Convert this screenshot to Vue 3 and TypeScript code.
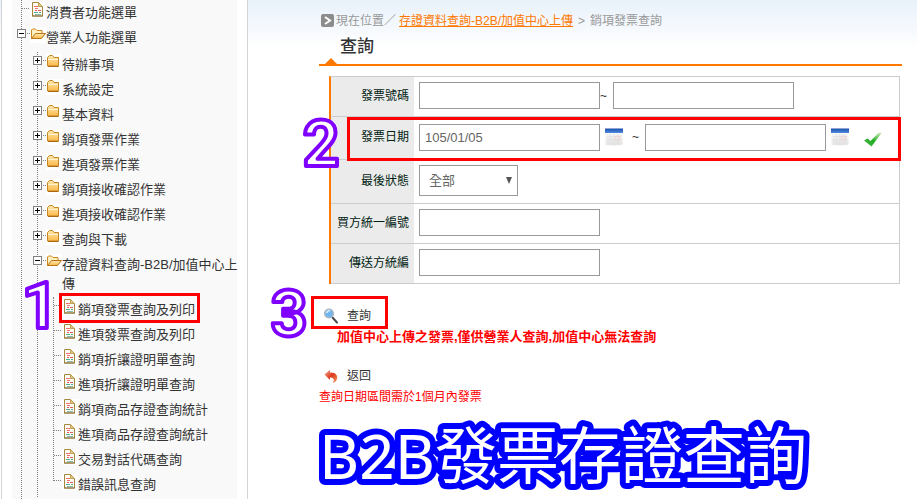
<script setup lang="ts">
import { reactive } from 'vue'

interface TreeNode {
  label: string
  kind: 'folder' | 'page'
  open?: boolean
  marked?: boolean
  children?: TreeNode[]
}

const folder = (label: string): TreeNode => ({ label, kind: 'folder' })
const page = (label: string, marked = false): TreeNode => ({ label, kind: 'page', marked })

const tree = reactive<TreeNode[]>([
  page('消費者功能選單'),
  {
    label: '營業人功能選單',
    kind: 'folder',
    open: true,
    children: [
      folder('待辦事項'),
      folder('系統設定'),
      folder('基本資料'),
      folder('銷項發票作業'),
      folder('進項發票作業'),
      folder('銷項接收確認作業'),
      folder('進項接收確認作業'),
      folder('查詢與下載'),
      {
        label: '存證資料查詢-B2B/加值中心上傳',
        kind: 'folder',
        open: true,
        children: [
          page('銷項發票查詢及列印', true),
          page('進項發票查詢及列印'),
          page('銷項折讓證明單查詢'),
          page('進項折讓證明單查詢'),
          page('銷項商品存證查詢統計'),
          page('進項商品存證查詢統計'),
          page('交易對話代碼查詢'),
          page('錯誤訊息查詢'),
        ],
      },
    ],
  },
])

const form = reactive({
  invoiceFrom: '',
  invoiceTo: '',
  dateFrom: '105/01/05',
  dateTo: '',
  status: 'all',
  buyerId: '',
  senderId: '',
})

function toggle(node: TreeNode) {
  node.open = !node.open
}
</script>

<template>
  <svg class="defs" aria-hidden="true">
    <defs>
      <linearGradient id="g-folder" x1="0" y1="0" x2="0" y2="1">
        <stop offset="0" stop-color="#ffe9b0" />
        <stop offset="1" stop-color="#fbb94a" />
      </linearGradient>
      <linearGradient id="g-cal" x1="0" y1="0" x2="0" y2="1">
        <stop offset="0" stop-color="#1a4dab" />
        <stop offset="1" stop-color="#4f8be0" />
      </linearGradient>
      <linearGradient id="g-sheet" x1="0" y1="0" x2="0" y2="1">
        <stop offset="0" stop-color="#fafafa" />
        <stop offset="1" stop-color="#e2e2e2" />
      </linearGradient>
      <linearGradient id="g-check" x1="1" y1="0" x2="0" y2="1">
        <stop offset="0" stop-color="#e0efc8" />
        <stop offset="0.55" stop-color="#1fae1f" />
        <stop offset="1" stop-color="#5cb05c" />
      </linearGradient>
      <linearGradient id="g-back" x1="0" y1="0" x2="1" y2="1">
        <stop offset="0" stop-color="#f7b09a" />
        <stop offset="0.5" stop-color="#dd3a1c" />
        <stop offset="1" stop-color="#f0a060" />
      </linearGradient>
      <symbol id="i-page" viewBox="0 0 16 16">
        <path d="M0 0h16v16H0z" fill="#fff" />
        <path d="M2.500 0.500h6l4 4v9.500h-10z" fill="#fffdf6" stroke="#a8873c" />
        <path d="M8.500 0.500v4h4z" fill="#dcc88c" stroke="#c0a050" />
        <path d="M2 14h11" stroke="#857238" />
        <path d="M4 4.500h4M5 6.500h3" stroke="#f07070" />
        <path d="M5 8.500h2M8 8.500h3" stroke="#e05858" />
        <path d="M4 10.500h4M9 10.500h2" stroke="#4fae8c" />
        <path d="M5 12.500h6" stroke="#8ab8b4" />
      </symbol>
      <symbol id="i-folder" viewBox="0 0 16 16">
        <path d="M0 0h16v16H0z" fill="#fff" />
        <path d="M1.500 3.500l2-2h3l1.500 2h4.500v8.500h-11z" fill="url(#g-folder)" stroke="#c58520" stroke-linejoin="round" />
        <path d="M2 5.500h10" stroke="#fff2cc" />
        <path d="M2 12.500h10.500" stroke="#a86a14" />
      </symbol>
      <symbol id="i-open" viewBox="0 0 16 16">
        <path d="M0 0h16v16H0z" fill="#fff" />
        <path d="M1.500 11.500V3l1-1h3l1.500 1.500h5v3" fill="#fff0c4" stroke="#d0861c" />
        <path d="M1.500 11.500l4-5h10l-4 5z" fill="url(#g-folder)" stroke="#b87418" stroke-linejoin="round" />
      </symbol>
      <symbol id="i-calendar" viewBox="0 0 20 18">
        <ellipse cx="10" cy="16" rx="9" ry="1.500" fill="#e4e4e4" />
        <path d="M1.500 4h17v11.500q-8 1.500-17-1z" fill="url(#g-sheet)" />
        <path d="M3 8.500h14M3 11.500h14M6.500 6v9M10 6v9M14 6v9" stroke="#dedee2" stroke-width="0.600" />
        <path d="M11.500 8h4v4h-4z" fill="none" stroke="#f4c8c4" stroke-width="0.600" />
        <path d="M1 0.500h18v4.500h-18z" fill="url(#g-cal)" />
      </symbol>
    </defs>
  </svg>

  <div class="page">
    <nav class="sidebar" aria-label="功能選單">
      <ul class="tree root">
        <li v-for="top in tree" :key="top.label">
          <div class="row">
            <span v-if="top.kind === 'page'" class="joint leaf"></span>
            <span v-else class="joint">
              <button type="button" class="toggle" :class="{ closed: !top.open }" :aria-label="top.label" @click="toggle(top)"></button>
            </span>
            <svg class="icon"><use :href="top.kind === 'page' ? '#i-page' : top.open ? '#i-open' : '#i-folder'" /></svg>
            <a href="#">{{ top.label }}</a>
          </div>
          <ul v-if="top.children && top.open" class="tree">
            <li v-for="mid in top.children" :key="mid.label">
              <div class="row">
                <span class="joint">
                  <button type="button" class="toggle" :class="{ closed: !mid.open }" :aria-label="mid.label" @click="toggle(mid)"></button>
                </span>
                <svg class="icon"><use :href="mid.open ? '#i-open' : '#i-folder'" /></svg>
                <a href="#">{{ mid.label }}</a>
              </div>
              <ul v-if="mid.children && mid.open" class="tree last">
                <li v-for="item in mid.children" :key="item.label">
                  <div class="row">
                    <span class="joint leaf"></span>
                    <svg class="icon"><use href="#i-page" /></svg>
                    <a href="#">{{ item.label }}</a>
                    <span v-if="item.marked" class="mark mark-menu">
                      <svg class="step"><text x="20" y="50">1</text></svg>
                    </span>
                  </div>
                </li>
              </ul>
            </li>
          </ul>
        </li>
      </ul>
    </nav>

    <main class="main">
      <div class="crumbs">
        <svg class="crumb-icon" viewBox="0 0 14 14" aria-hidden="true">
          <rect x="0" y="0" width="13" height="13" rx="2" fill="#8c8c8c" />
          <path d="M4 3l5 3.500-5 3.500" fill="none" stroke="#fff" stroke-width="2" />
        </svg>
        <span>現在位置／</span>
        <a href="#">存證資料查詢-B2B/加值中心上傳</a>
        <span class="sep">&gt;</span>
        <span>銷項發票查詢</span>
      </div>
      <h1 class="title">查詢</h1>

      <form @submit.prevent>
        <table class="fields">
          <tbody>
            <tr>
              <th scope="row"><label for="invoice-from">發票號碼</label></th>
              <td>
                <div class="line">
                  <input id="invoice-from" v-model="form.invoiceFrom" type="text" />
                  <span class="tilde">~</span>
                  <input v-model="form.invoiceTo" type="text" aria-label="發票號碼" />
                </div>
              </td>
            </tr>
            <tr class="dates">
              <th scope="row"><label for="date-from">發票日期</label></th>
              <td>
                <div class="line">
                  <input id="date-from" v-model="form.dateFrom" type="text" />
                  <button type="button" class="plain cal" aria-label="發票日期">
                    <svg viewBox="0 0 20 18"><use href="#i-calendar" /></svg>
                  </button>
                  <span class="tilde wide">~</span>
                  <input v-model="form.dateTo" type="text" aria-label="發票日期" />
                  <button type="button" class="plain cal" aria-label="發票日期">
                    <svg viewBox="0 0 20 18"><use href="#i-calendar" /></svg>
                  </button>
                  <svg class="check" viewBox="0 0 20 16" aria-hidden="true">
                    <path d="M1 9.500L4.500 7.500 7.500 10 15.500 2 19 1.500 8.500 15.500z" fill="url(#g-check)" />
                  </svg>
                </div>
                <span class="mark mark-date">
                  <svg class="step"><text x="20" y="50">2</text></svg>
                </span>
              </td>
            </tr>
            <tr>
              <th scope="row"><label for="status">最後狀態</label></th>
              <td>
                <div class="select">
                  <select id="status" v-model="form.status">
                    <option value="all">全部</option>
                  </select>
                </div>
              </td>
            </tr>
            <tr>
              <th scope="row"><label for="buyer">買方統一編號</label></th>
              <td><div class="line"><input id="buyer" v-model="form.buyerId" type="text" /></div></td>
            </tr>
            <tr>
              <th scope="row"><label for="sender">傳送方統編</label></th>
              <td><div class="line"><input id="sender" v-model="form.senderId" type="text" /></div></td>
            </tr>
          </tbody>
        </table>

        <div class="actions">
          <button type="submit" class="plain action">
            <svg class="glyph" viewBox="0 0 16 16" aria-hidden="true">
              <path d="M9.500 9.500l4.500 5" stroke="#4a4a52" stroke-width="2" stroke-linecap="round" />
              <circle cx="6" cy="5.500" r="4.300" fill="#6fb7ee" stroke="#a9b6c4" stroke-width="1.600" />
              <path d="M3.500 5q1-2.500 3.500-2.500" fill="none" stroke="#d6eeff" stroke-width="1.400" />
            </svg>
            查詢
            <span class="mark mark-search">
              <svg class="step"><text x="20" y="50">3</text></svg>
            </span>
          </button>
          <p class="warning">加值中心上傳之發票,僅供營業人查詢,加值中心無法查詢</p>
          <button type="button" class="plain action">
            <svg class="glyph" viewBox="0 0 16 16" aria-hidden="true">
              <path d="M1.500 6.500L7 2v2.500c5-.5 8 2.500 7 6.500-.6 2-2 3.200-4.500 4 2.500-3 1.500-5.500-2.500-5.500V12z" fill="url(#g-back)" />
            </svg>
            返回
          </button>
          <p class="note">查詢日期區間需於1個月內發票</p>
        </div>
      </form>
      <svg class="banner" role="img" aria-label="B2B發票存證查詢"><text x="0" y="65">B2B發票存證查詢</text></svg>
    </main>
  </div>
</template>

<style>
body {
  margin: 0;
  background: #fff;
}
</style>

<style scoped>
.defs {
  position: absolute;
  width: 0;
  height: 0;
}
.page {
  display: flex;
  min-height: 100vh;
  background: linear-gradient(#e8f1fa, #fff 48px);
  font: 12px/16px "Liberation Sans", "Noto Sans CJK TC", sans-serif;
  color: #333;
}
.sidebar {
  display: flex;
  flex: none;
  box-sizing: border-box;
  width: 247px;
  margin-left: 1px;
  padding: 0 10px;
  border: solid #d4d4d4;
  border-width: 0 1px;
  background: #fff;
}
.tree {
  margin: 0;
  padding: 0;
  list-style: none;
  border-left: 1px dotted #808080;
}
.tree .tree {
  margin: 2px 0 0 15px;
}
.tree .tree.last {
  margin-top: 4px;
  position: relative;
  border-left: 0;
  padding-left: 1px;
}
.last::before {
  content: "";
  position: absolute;
  top: 0;
  bottom: 16px;
  left: 0;
  border-left: 1px dotted #808080;
}
.root {
  flex: 1;
  border-left: 0;
  padding-left: 10px;
  background:
    repeating-linear-gradient(#808080 0 1px, transparent 1px 2px) 9px 0 / 1px 100% no-repeat,
    #f9f9f9;
}
.row {
  display: flex;
  align-items: flex-start;
  position: relative;
  margin: 0 -4px 0 -5px;
  min-height: 25px;
}
.row a {
  padding-top: 3px;
  font-size: 13px;
  line-height: 19px;
  color: #333;
  text-decoration: none;
}
.joint {
  display: flex;
  flex: none;
  width: 9px;
  margin-top: 8px;
  padding-right: 4px;
  background: linear-gradient(90deg, #808080 1px, transparent 1px) 0 0 / 2px 1px repeat-x;
}
.joint.leaf {
  width: 8px;
  height: 1px;
  padding: 0;
  margin-left: 5px;
}
.toggle {
  width: 9px;
  height: 9px;
  margin: -4px 0 0;
  padding: 0;
  border: 1px solid #808080;
  border-radius: 0;
  background: linear-gradient(#000, #000) center / 5px 1px no-repeat, #fff;
}
.toggle.closed {
  background:
    linear-gradient(#000, #000) center / 5px 1px no-repeat,
    linear-gradient(#000, #000) center / 1px 5px no-repeat,
    #fff;
}
.icon {
  flex: none;
  width: 16px;
  height: 16px;
  margin-top: 2px;
}
.mark {
  position: absolute;
  box-sizing: border-box;
  border: 3px solid #f00;
  pointer-events: none;
}
.mark-menu {
  inset: -4px auto auto 10px;
  width: 141px;
  height: 30px;
}
.step {
  position: absolute;
  width: 40px;
  height: 56px;
  overflow: visible;
  font: bold 64px/64px Roboto, "Liberation Sans", sans-serif;
  text-anchor: middle;
  fill: #fff;
  stroke: #7f00ff;
  stroke-width: 4px;
  stroke-linejoin: round;
}
.mark-menu .step {
  top: -18px;
  left: -42px;
}
.mark-date .step {
  top: -4px;
  left: -49px;
}
.mark-search .step {
  top: -13px;
  left: -45px;
}
.main {
  flex: 1;
  min-width: 0;
  padding: 13px 15px 0 71px;
}
.crumbs {
  display: flex;
  align-items: center;
  padding-left: 2px;
  color: #999;
  white-space: nowrap;
}
.crumb-icon {
  width: 14px;
  height: 14px;
  margin-right: 1px;
}
.crumbs a {
  margin-left: 3px;
  color: #ff7800;
  text-decoration: underline;
}
.sep {
  margin: 0 5px;
}
.title {
  position: relative;
  margin: 6px 0 10px;
  padding: 0 0 5px 21px;
  border-bottom: 2px solid #ff7800;
  font-size: 17px;
  line-height: 24px;
  font-weight: 500;
  color: #333;
}
.title::after {
  content: "";
  position: absolute;
  left: 6px;
  bottom: 0;
  border: solid transparent;
  border-width: 0 6px 6px;
  border-bottom-color: #ff7800;
}
.fields {
  width: calc(100% - 12px);
  margin-left: 10px;
  border-collapse: separate;
  border-spacing: 0;
  border: solid #ccc;
  border-width: 1px 1px 0 0;
  border-left: 2px solid #ff7800;
}
.fields th,
.fields td {
  box-sizing: border-box;
  height: 40px;
  padding: 5px 5px 7px;
  border-bottom: 1px solid #ccc;
}
.fields th {
  width: 83px;
  background: #ebebeb;
  font-weight: 400;
  color: #021;
  text-align: right;
  white-space: nowrap;
}
.fields .dates td {
  height: 43px;
  position: relative;
}
.line {
  display: flex;
  align-items: center;
}
input,
select {
  box-sizing: border-box;
  border: 1px solid #999;
  border-radius: 0;
  background: #fff;
  font: 13px/17px "Liberation Sans", "Noto Sans CJK TC", sans-serif;
  color: #666;
}
input {
  flex: 0 1 181px;
  width: 181px;
  min-width: 0;
  height: 27px;
  padding: 0 5px;
}
.tilde {
  width: 13px;
}
.tilde.wide {
  margin-left: 8px;
}
.plain {
  padding: 0;
  border: 0;
  background: none;
  font: inherit;
  color: inherit;
}
.cal {
  width: 20px;
  height: 18px;
  margin: 0 0 0 4px;
}
.cal svg {
  display: block;
  width: 20px;
  height: 18px;
}
.check {
  width: 20px;
  height: 16px;
  margin: 4px 0 0 13px;
}
.mark-date {
  inset: 0 -2px -2px -67px;
}
.select {
  position: relative;
  width: 99px;
}
.select::after {
  content: "";
  position: absolute;
  top: 12px;
  right: 6px;
  border: solid transparent;
  border-width: 7px 3px 0;
  border-top-color: #555;
  pointer-events: none;
}
select {
  display: block;
  width: 99px;
  height: 31px;
  padding: 0 9px;
  appearance: none;
}
.actions {
  display: flex;
  flex-direction: column;
  align-items: flex-start;
  padding-top: 22px;
}
.action {
  display: flex;
  align-items: center;
  gap: 8px;
  position: relative;
  height: 20px;
  margin-left: 4px;
}
.glyph {
  width: 16px;
  height: 16px;
}
.mark-search {
  top: -10px;
  left: -12px;
  width: 77px;
  height: 33px;
}
.actions p {
  margin: 0;
  color: #f00;
}
.actions .warning {
  margin: 3px 0 21px 18px;
  font-size: 13px;
  font-weight: 700;
}
.actions .note {
  margin-top: 3px;
}
.banner {
  display: block;
  width: 100%;
  height: 84px;
  margin-top: 9px;
  overflow: visible;
  font: 62px/84px "Noto Sans", "Noto Sans CJK TC", sans-serif;
  fill: #fff;
  stroke: #00f;
  stroke-width: 12px;
  stroke-linejoin: round;
  paint-order: stroke fill;
}
</style>
